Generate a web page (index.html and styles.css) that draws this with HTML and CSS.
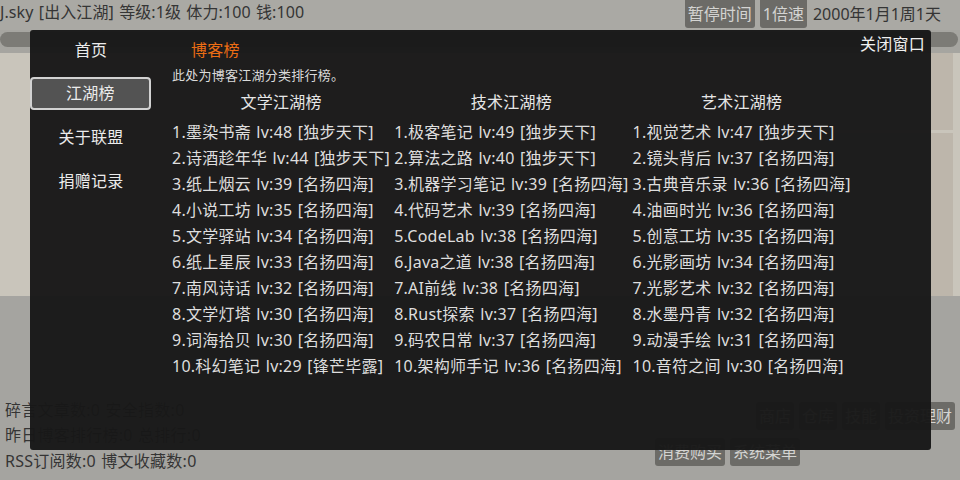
FILE: index.html
```html
<!DOCTYPE html>
<html lang="zh">
<head>
<meta charset="utf-8">
<title>博客江湖</title>
<link rel="stylesheet" href="styles.css">
</head>
<body>
<div class="app">
  <div class="topbar">
    <div class="status">J.sky [出入江湖] 等级:1级 体力:100 钱:100</div>
    <div class="controls">
      <span class="btn top-btn">暂停时间</span>
      <span class="btn top-btn">1倍速</span>
      <span class="date">2000年1月1周1天</span>
    </div>
  </div>
  <div class="progress"></div>
  <div class="main">
    <div class="panel-left"></div>
    <div class="panel-center"></div>
    <div class="panel-right">
      <div class="pr-top"></div>
      <div class="pr-bottom"></div>
    </div>
  </div>
  <div class="bottom">
    <div class="stats">
      <div>碎言文章数:0 安全指数:0</div>
      <div>昨日博客排行榜:0 总排行:0</div>
      <div>RSS订阅数:0 博文收藏数:0</div>
    </div>
    <div class="actions">
      <div class="action-row first">
        <span class="btn">商店</span><span class="btn">仓库</span><span class="btn">技能</span><span class="btn">投资理财</span>
      </div>
      <div class="action-row">
        <span class="btn">消费购买</span><span class="btn">系统菜单</span>
      </div>
    </div>
  </div>

  <div class="modal">
    <nav class="sidebar">
      <div class="nav-item">首页</div>
      <div class="nav-item active">江湖榜</div>
      <div class="nav-item">关于联盟</div>
      <div class="nav-item">捐赠记录</div>
    </nav>
    <section class="content">
      <h2 class="title">博客榜</h2>
      <p class="desc">此处为博客江湖分类排行榜。</p>
      <table class="ranks">
        <thead>
          <tr><th>文学江湖榜</th><th>技术江湖榜</th><th>艺术江湖榜</th></tr>
        </thead>
        <tbody>
          <tr><td>1.墨染书斋 lv:48 [独步天下]</td><td>1.极客笔记 lv:49 [独步天下]</td><td>1.视觉艺术 lv:47 [独步天下]</td></tr>
          <tr><td>2.诗酒趁年华 lv:44 [独步天下]</td><td>2.算法之路 lv:40 [独步天下]</td><td>2.镜头背后 lv:37 [名扬四海]</td></tr>
          <tr><td>3.纸上烟云 lv:39 [名扬四海]</td><td>3.机器学习笔记 lv:39 [名扬四海]</td><td>3.古典音乐录 lv:36 [名扬四海]</td></tr>
          <tr><td>4.小说工坊 lv:35 [名扬四海]</td><td>4.代码艺术 lv:39 [名扬四海]</td><td>4.油画时光 lv:36 [名扬四海]</td></tr>
          <tr><td>5.文学驿站 lv:34 [名扬四海]</td><td>5.CodeLab lv:38 [名扬四海]</td><td>5.创意工坊 lv:35 [名扬四海]</td></tr>
          <tr><td>6.纸上星辰 lv:33 [名扬四海]</td><td>6.Java之道 lv:38 [名扬四海]</td><td>6.光影画坊 lv:34 [名扬四海]</td></tr>
          <tr><td>7.南风诗话 lv:32 [名扬四海]</td><td>7.AI前线 lv:38 [名扬四海]</td><td>7.光影艺术 lv:32 [名扬四海]</td></tr>
          <tr><td>8.文学灯塔 lv:30 [名扬四海]</td><td>8.Rust探索 lv:37 [名扬四海]</td><td>8.水墨丹青 lv:32 [名扬四海]</td></tr>
          <tr><td>9.词海拾贝 lv:30 [名扬四海]</td><td>9.码农日常 lv:37 [名扬四海]</td><td>9.动漫手绘 lv:31 [名扬四海]</td></tr>
          <tr><td>10.科幻笔记 lv:29 [锋芒毕露]</td><td>10.架构师手记 lv:36 [名扬四海]</td><td>10.音符之间 lv:30 [名扬四海]</td></tr>
        </tbody>
      </table>
    </section>
    <span class="close">关闭窗口</span>
  </div>
</div>
</body>
</html>
```

FILE: styles.css
```css
* { box-sizing: border-box; }
html, body { margin: 0; padding: 0; }
body {
  width: 960px;
  height: 480px;
  overflow: hidden;
  background: #a6a5a0;
  font-family: "Noto Sans", "Noto Sans CJK SC", sans-serif;
  font-size: 16px;
  letter-spacing: 0.25px;
  word-spacing: 1px;
  color: #333;
}
.app {
  position: relative;
  width: 960px;
  height: 480px;
  display: flex;
  flex-direction: column;
}
.topbar {
  height: 30px;
  background: #aaa9a4;
  display: flex;
  justify-content: space-between;
  align-items: flex-start;
}
.status {
  line-height: 24px;
  color: #353535;
  letter-spacing: 0.1px;
}
.controls {
  display: flex;
  gap: 5px;
  align-items: flex-start;
  padding-right: 19px;
  letter-spacing: 0;
}
.btn {
  background: #6c6b67;
  color: #d4d4d2;
  border-radius: 3px;
  padding: 0 3px;
  line-height: 28px;
  white-space: nowrap;
  letter-spacing: 0;
}
.top-btn { border-radius: 0 0 3px 3px; }
.date { line-height: 28px; color: #353535; margin-left: 1px; letter-spacing: 0; }
.progress {
  height: 15px;
  margin: 2px 2px 0 0;
  background: #7c7b76;
  border-radius: 8px;
}
.main {
  height: 243px;
  margin-top: 6px;
  background: #c9c5bb;
  display: flex;
  gap: 8px;
}
.panel-left { width: 150px; }
.panel-center { flex: 1; }
.panel-right {
  width: 160px;
  display: flex;
  flex-direction: column;
  gap: 3px;
  padding-right: 7px;
}
.pr-top { height: 77px; background: #bdb6ab; }
.pr-bottom { flex: 1; background: #bdb6ab; }
.bottom {
  flex: 1;
  display: flex;
  justify-content: space-between;
  align-items: flex-end;
  background: #a5a4a0;
}
.stats {
  padding: 0 0 6px 5px;
  line-height: 25.5px;
  color: #353535;
}
.actions {
  width: 305px;
  display: flex;
  flex-direction: column;
  gap: 8px;
  padding-bottom: 14px;
}
.action-row { display: flex; gap: 5px; }
.action-row.first { justify-content: flex-end; padding-right: 5px; }
.modal {
  position: absolute;
  left: 30px;
  top: 30px;
  width: 901px;
  height: 420px;
  background: rgba(24, 24, 24, 0.97);
  border-radius: 3px;
  display: flex;
}
.sidebar {
  width: 122px;
  padding-top: 4px;
}
.nav-item {
  height: 32px;
  line-height: 32px;
  margin-bottom: 12px;
  text-align: center;
  color: #ebebeb;
}
.nav-item.active {
  width: 121px;
  height: 33px;
  line-height: 29px;
  margin-top: -1px;
  margin-bottom: 11px;
  background: #535353;
  border: 2px solid #d2d2d2;
  border-radius: 4px;
}
.content {
  flex: 1;
  padding: 9px 0 0 20px;
}
.title {
  margin: 0 0 0 19px;
  font-size: 16px;
  font-weight: normal;
  line-height: 22px;
  color: #ec6d14;
}
.desc {
  margin: 5px 0 0 0;
  font-size: 13px;
  line-height: 18px;
  color: #dadada;
}
.ranks {
  margin-top: 5px;
  border-collapse: collapse;
  color: #dedede;
  margin-left: -2px;
}
.ranks th {
  font-weight: normal;
  line-height: 26px;
  padding: 0 2px 4px;
  text-align: center;
  color: #e6e6e6;
}
.ranks td {
  line-height: 26px;
  padding: 0 2px;
  white-space: nowrap;
}
.close {
  position: absolute;
  top: 3px;
  right: 6px;
  line-height: 22px;
  color: #f0f0f0;
}
```
